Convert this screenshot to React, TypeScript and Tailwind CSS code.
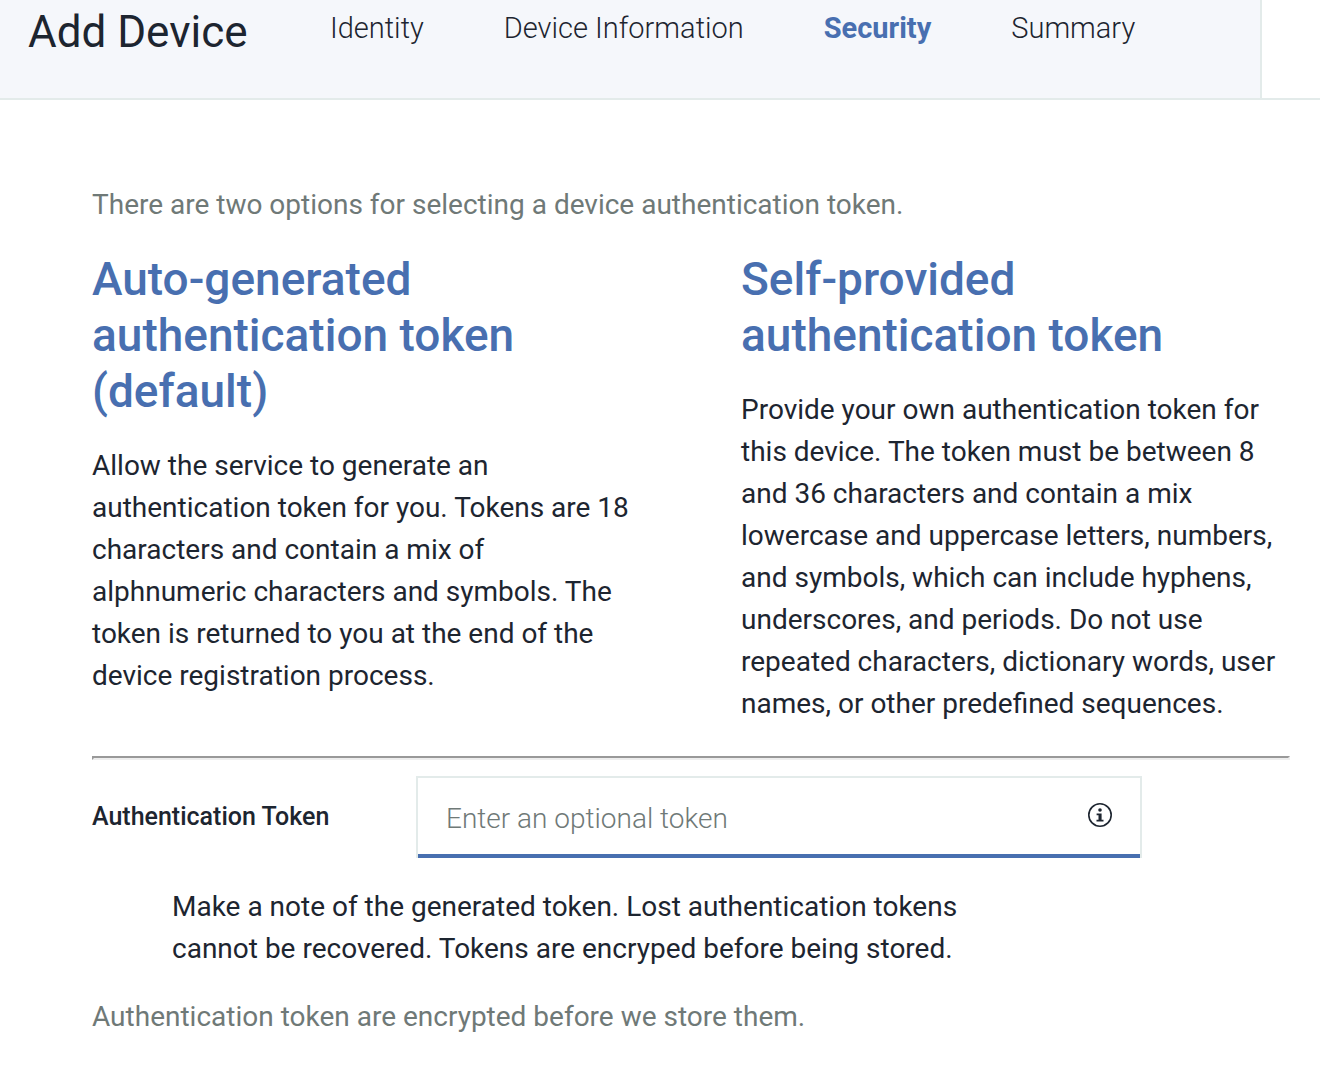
const steps = ['Identity', 'Device Information', 'Security', 'Summary'];

const options = [
  {
    title: 'Auto-generated authentication token (default)',
    body: 'Allow the service to generate an authentication token for you. Tokens are 18 characters and contain a mix of alphnumeric characters and symbols. The token is returned to you at the end of the device registration process.',
  },
  {
    title: 'Self-provided authentication token',
    body: 'Provide your own authentication token for this device. The token must be between 8 and 36 characters and contain a mix lowercase and uppercase letters, numbers, and symbols, which can include hyphens, underscores, and periods. Do not use repeated characters, dictionary words, user names, or other predefined sequences.',
  },
];

function InfoIcon() {
  return (
    <svg viewBox="0 0 24 24" className="size-6" aria-hidden="true">
      <circle cx="12" cy="12" r="11.2" fill="none" stroke="currentColor" strokeWidth="1.6" />
      <circle cx="12" cy="7" r="1.8" fill="currentColor" />
      <path d="M8.6 10.4h5v6.4h1.9v1.8H8.5v-1.8h2v-4.6H8.6z" fill="currentColor" />
    </svg>
  );
}

export default function App() {
  return (
    <div className="min-h-screen bg-white font-['Roboto',sans-serif] text-[28px] leading-[42px] text-[#1d2530]">
      <header className="flex border-b-2 border-[#e3ebea]">
        <div className="flex flex-1 items-start border-r-2 border-[#e3ebea] bg-[#f5f7fb] pb-[38px] pl-7">
          <h1 className="w-[302px] shrink-0 pt-1 text-[44px] leading-[56px]">Add Device</h1>
          <nav aria-label="Steps" className="flex gap-20 pt-[7px] text-[29px] leading-[42px] font-light whitespace-nowrap">
            {steps.map((step) => (
              <a
                key={step}
                href="#"
                aria-current={step === 'Security' ? 'step' : undefined}
                className="aria-[current=step]:font-bold aria-[current=step]:text-[#486fb0]"
              >
                {step}
              </a>
            ))}
          </nav>
        </div>
        <div className="w-[58px]" />
      </header>

      <main className="pt-[84px] pr-[30px] pb-10 pl-[92px]">
        <p className="text-[#6f7977]">There are two options for selecting a device authentication token.</p>

        <div className="mt-[25px] grid grid-cols-2 gap-[100px]">
          {options.map((option) => (
            <section key={option.title}>
              <h2 className="text-[46px] leading-[56px] font-medium text-[#486fb0]">{option.title}</h2>
              <p className="mt-[26px]">{option.body}</p>
            </section>
          ))}
        </div>

        <hr className="mt-[31px] h-1 border-2 border-t-[#999] border-r-[#eee] border-b-[#eee] border-l-[#999]" />

        <div className="mt-4 flex items-center">
          <label htmlFor="token" className="w-[324px] shrink-0 text-[25px] font-medium">
            Authentication Token
          </label>
          <div className="relative w-[726px] border-2 border-b-0 border-[#e3ebea]">
            <input
              id="token"
              type="text"
              placeholder="Enter an optional token"
              className="block h-20 w-full border-b-4 border-[#486fb0] pt-1 pr-20 pl-7 font-light outline-none placeholder:text-[#6f7977]"
            />
            <button type="button" aria-label="Token information" className="absolute top-[25px] right-7">
              <InfoIcon />
            </button>
          </div>
        </div>

        <p className="mt-7 ml-20 max-w-[820px]">
          Make a note of the generated token. Lost authentication tokens cannot be recovered. Tokens are encryped
          before being stored.
        </p>
        <p className="mt-[26px] text-[#6f7977]">Authentication token are encrypted before we store them.</p>
      </main>
    </div>
  );
}
